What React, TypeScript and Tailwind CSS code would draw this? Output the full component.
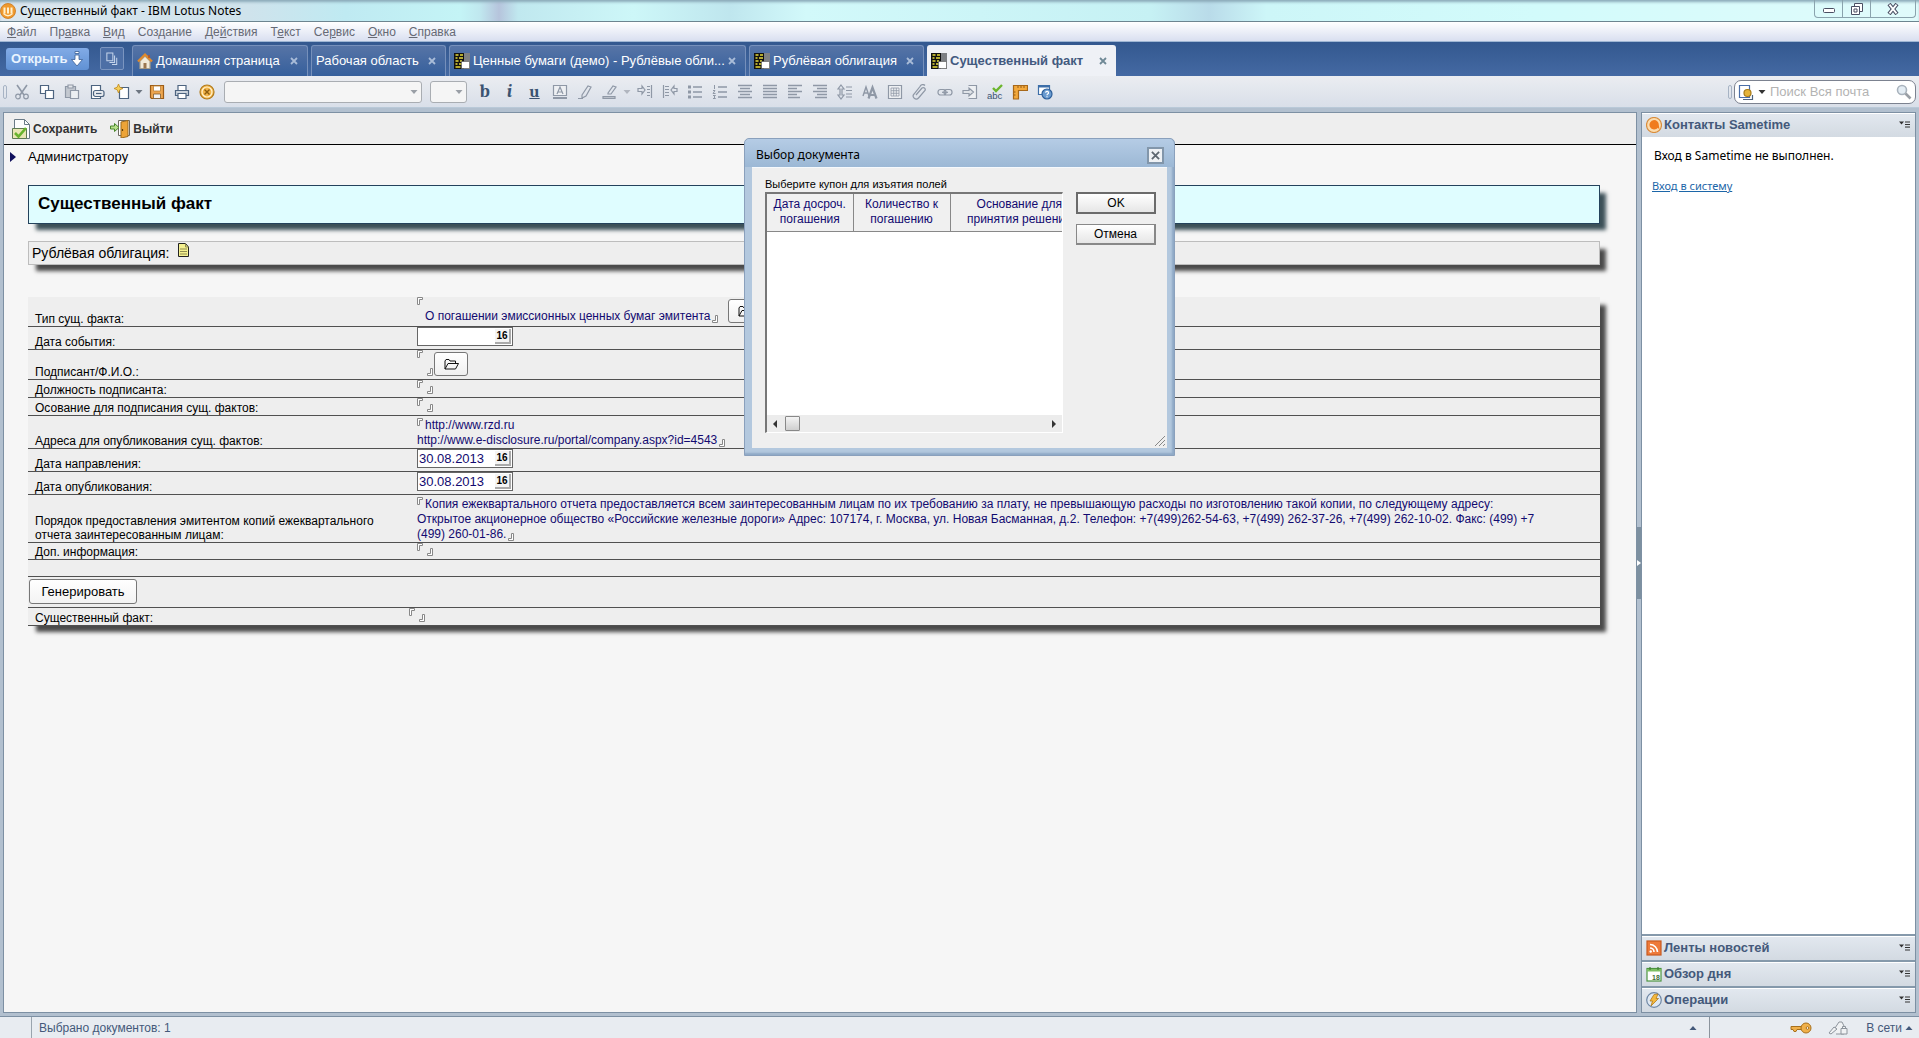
import type { ReactNode } from 'react'

const MENU = [
  ['', 'Ф', 'айл'],
  ['Пр', 'а', 'вка'],
  ['', 'В', 'ид'],
  ['Соз', 'д', 'ание'],
  ['Де', 'й', 'ствия'],
  ['Т', 'е', 'кст'],
  ['Се', 'р', 'вис'],
  ['', 'О', 'кно'],
  ['', 'С', 'правка'],
]

const G = '#8f98a6'
const D = '#4d6480'

function Svg({ children, className = 'w-4 h-4' }: { children: ReactNode; className?: string }) {
  return (
    <svg viewBox="0 0 16 16" className={`${className} shrink-0`} fill="none" stroke={G} strokeWidth="1.2" aria-hidden="true">
      {children}
    </svg>
  )
}

function Caret({ className = '' }: { className?: string }) {
  return (
    <svg viewBox="0 0 8 4" className={`w-2 h-1 shrink-0 ${className}`} fill="currentColor" aria-hidden="true">
      <path d="M0.500 0h7L4 4z" />
    </svg>
  )
}

function DbIcon() {
  return (
    <Svg>
      <path d="M0 0h16v16H0z" fill="#7d8084" stroke="none" />
      <path d="M0 0h10v16H0z" fill="#111" stroke="none" />
      <path d="M1.500 2h3M6 2h3M1.500 5h2M5 5h4M1.500 8h3M6 8h2M1.500 11h2M5 11h3M1.500 14h5" stroke="#e8dc3a" strokeWidth="1.600" />
      <path d="M7.500 8.500h8v7h-8z" fill="#fff" stroke="#555" strokeWidth="0.600" />
    </Svg>
  )
}

function HomeIcon() {
  return (
    <Svg>
      <path d="M3 8v7.500h10V8L8 3z" fill="#f2ead8" stroke="#a9a08c" />
      <path d="M1 8.500L8 1.500l7 7" stroke="#e08a2c" strokeWidth="2.200" />
      <path d="M6.500 10h3v5.500h-3z" fill="#9b7750" stroke="none" />
      <path d="M12 2v3" stroke="#b4562a" strokeWidth="1.600" />
    </Svg>
  )
}

function ListLines({ from, to }: { from: number[]; to: number[] }) {
  return (
    <Svg>
      <path d={[1, 4, 7, 10, 13].map((v, i) => `M${from[i]} ${v + 0.5}H${to[i]}`).join('')} strokeWidth="1.400" />
    </Svg>
  )
}

const FILE_TOOLS: { label: string; icon: ReactNode }[] = [
  {
    label: 'Вырезать',
    icon: (
      <Svg>
        <path d="M3 1l7 10M13 1L6 11" strokeWidth="1.600" />
        <circle cx="4" cy="12.500" r="2.300" />
        <circle cx="12" cy="12.500" r="2.300" />
      </Svg>
    ),
  },
  {
    label: 'Копировать',
    icon: (
      <Svg>
        <path d="M1.500 1.500h8v8h-8z" fill="#fff" stroke={D} />
        <path d="M6.500 6.500h8v8h-8z" fill="#fff" stroke={D} />
      </Svg>
    ),
  },
  {
    label: 'Вставить',
    icon: (
      <Svg>
        <path d="M1.500 2.500h10v11h-10z" fill="#c3c8d0" />
        <path d="M4 1h5v3H4z" fill="#e4e7eb" />
        <path d="M6.500 6.500h8v8h-8z" fill="#eceff2" />
      </Svg>
    ),
  },
  {
    label: 'Вставить ссылку',
    icon: (
      <Svg>
        <path d="M2.500 1.500h9v13h-9z" fill="#fff" stroke={D} />
        <rect x="4.500" y="6.500" width="10.500" height="6" rx="2" fill="#e9ecf0" stroke={D} />
        <path d="M7 9.500h5.500" stroke={D} />
      </Svg>
    ),
  },
  {
    label: 'Создать',
    icon: (
      <Svg>
        <path d="M5.500 3.500h9v11h-9z" fill="#fff" stroke={D} />
        <path d="M4.500 0l1.300 3.200L9 4.500 5.800 5.800 4.500 9 3.200 5.800 0 4.500l3.200-1.300z" fill="#f6cf57" stroke="#c28a20" strokeWidth="0.800" />
      </Svg>
    ),
  },
]

const SAVE_TOOLS: { label: string; icon: ReactNode }[] = [
  {
    label: 'Сохранить файл',
    icon: (
      <Svg>
        <path d="M1.500 1.500h13v13h-12l-1-1z" fill="#eda650" stroke="#9c5d18" />
        <path d="M4.500 2h7v5h-7z" fill="#fff" stroke="#b98036" strokeWidth="0.800" />
        <path d="M4.500 10h7v4.500h-7z" fill="#f4f4f4" stroke="#7c5a30" strokeWidth="0.800" />
      </Svg>
    ),
  },
  {
    label: 'Печать',
    icon: (
      <Svg>
        <path d="M4 1.500h8v5H4z" fill="#fff" stroke={D} />
        <path d="M1.500 6.500h13v5h-13z" fill="#cdd5de" stroke={D} />
        <path d="M4 9.500h8v5H4z" fill="#fff" stroke={D} />
      </Svg>
    ),
  },
  {
    label: 'Закрыть',
    icon: (
      <Svg>
        <circle cx="8" cy="8" r="7" fill="#f3b54a" stroke="#b07a1c" />
        <circle cx="8" cy="8" r="5" stroke="#fff3d0" />
        <path d="M5.500 5.500l5 5M10.500 5.500l-5 5" stroke="#8b5c10" strokeWidth="1.400" />
      </Svg>
    ),
  },
]

const COLOR_TOOLS: { label: string; icon: ReactNode }[] = [
  { label: 'Полужирный', icon: <span className="font-serif font-bold text-[18px] leading-4 text-[#3b5371]">b</span> },
  { label: 'Курсив', icon: <span className="font-serif font-bold italic text-[18px] leading-4 text-[#3b5371]">i</span> },
  { label: 'Подчёркнутый', icon: <span className="font-serif font-bold underline text-[17px] leading-4 text-[#3b5371]">u</span> },
  {
    label: 'Цвет текста',
    icon: (
      <Svg>
        <path d="M1.500 1.500h13v10h-13z" fill="#eef0f3" />
        <path d="M5 10l3-7 3 7M6 8h4" />
        <path d="M1 13h14v2H1z" fill={G} stroke="none" />
      </Svg>
    ),
  },
  {
    label: 'Маркер',
    icon: (
      <Svg>
        <path d="M5 11l6-9 3 1-5 9-4 2zM1 14.500h5" />
      </Svg>
    ),
  },
  {
    label: 'Выделение',
    icon: (
      <Svg>
        <path d="M6 9l5-7 3 1-5 7H6z" />
        <path d="M1 12.500h12v2H1z" fill="#b9bfc8" />
      </Svg>
    ),
  },
]

const PARA_TOOLS: { label: string; icon: ReactNode }[] = [
  {
    label: 'Увеличить отступ',
    icon: (
      <Svg>
        <path d="M1 4.500h4V2l3 4-3 4V7.500H1zM10 2.500h3M10 5.500h3M10 8.500h3M10 11.500h3M14.500 1v13" />
      </Svg>
    ),
  },
  {
    label: 'Уменьшить отступ',
    icon: (
      <Svg>
        <path d="M15 4.500h-3V2L9 6l3 4V7.500h3zM3 2.500h4M3 5.500h4M3 8.500h4M3 11.500h4M1.500 1v13" />
      </Svg>
    ),
  },
  {
    label: 'Маркированный список',
    icon: (
      <Svg>
        <path d="M6 3h9M6 8h9M6 13h9" strokeWidth="1.400" />
        <path d="M1 1.500h3v3H1zM1 6.500h3v3H1zM1 11.500h3v3H1z" fill={G} stroke="none" />
      </Svg>
    ),
  },
  {
    label: 'Нумерованный список',
    icon: (
      <Svg>
        <path d="M6 3h9M6 8h9M6 13h9" strokeWidth="1.400" />
        <path d="M2.500 1v4M1 6.500h2L1 9.500h2.500M1 11.500h2.500L2 13l1.500 1.500H1" strokeWidth="1" />
      </Svg>
    ),
  },
  { label: 'По центру', icon: <ListLines from={[1, 3, 1, 3, 1]} to={[15, 13, 15, 13, 15]} /> },
  { label: 'По ширине', icon: <ListLines from={[1, 1, 1, 1, 1]} to={[15, 15, 15, 15, 15]} /> },
  { label: 'По левому краю', icon: <ListLines from={[1, 1, 1, 1, 1]} to={[15, 10, 15, 10, 13]} /> },
  { label: 'По правому краю', icon: <ListLines from={[1, 5, 1, 5, 3]} to={[15, 15, 15, 15, 15]} /> },
  {
    label: 'Интервал',
    icon: (
      <Svg>
        <path d="M4 1l3 4H5v6h2l-3 4-3-4h2V5H1zM9 3h6M9 6.500h6M9 10h6M9 13h6" />
      </Svg>
    ),
  },
  {
    label: 'Шрифт',
    icon: (
      <Svg>
        <path d="M1 12l3-9 3 9M2 9h4" strokeWidth="1.400" />
        <path d="M6.500 14.500l4-11 4 11M8 11h5" strokeWidth="2.200" />
      </Svg>
    ),
  },
  {
    label: 'Таблица',
    icon: (
      <Svg>
        <path d="M1.500 1.500h13v13h-13z" fill="#eef0f3" />
        <path d="M4 4h8v8H4zM4 6.700h8M4 9.300h8M6.700 4v8M9.300 4v8" strokeWidth="0.800" />
      </Svg>
    ),
  },
  {
    label: 'Вложение',
    icon: (
      <Svg>
        <path d="M4 11l6-7a2 2 0 013 2.500L6.500 14a3 3 0 01-4.500-4l6-7.500a3 3 0 015-1" strokeWidth="1.200" />
      </Svg>
    ),
  },
  {
    label: 'Ссылка',
    icon: (
      <Svg>
        <rect x="1" y="5.500" width="8" height="5.500" rx="2.500" />
        <rect x="7" y="5.500" width="8" height="5.500" rx="2.500" />
        <path d="M5 8.300h6" />
      </Svg>
    ),
  },
  {
    label: 'Импорт',
    icon: (
      <Svg>
        <path d="M6.500 1.500h8v13h-8" fill="#eef0f3" />
        <path d="M1 6.500h6V4l4.500 4L7 12V9.500H1z" fill="#dfe3e8" />
      </Svg>
    ),
  },
  {
    label: 'Орфография',
    icon: (
      <Svg>
        <text x="0" y="15" fontSize="9.500" fontFamily="Liberation Sans, sans-serif" fill="#3b5371" stroke="none">abc</text>
        <path d="M6 4l3 3 6-6" stroke="#6cb52d" strokeWidth="2.400" />
      </Svg>
    ),
  },
  {
    label: 'Линейка',
    icon: (
      <Svg>
        <path d="M1.500 1.500h14v5h-9v8.500h-5z" fill="#f3a93c" stroke="#a7681a" />
        <path d="M6 4V2M9 4V2M12 4V2M3.500 8H2M3.500 11H2" stroke="#7b4a10" strokeWidth="0.800" />
      </Svg>
    ),
  },
  {
    label: 'Справка по окну',
    icon: (
      <Svg>
        <path d="M1.500 1.500h11v9h-11z" fill="#fff" stroke="#3d6ea8" />
        <path d="M1 1h12v2.500H1z" fill="#3d6ea8" stroke="none" />
        <circle cx="10" cy="10" r="5" fill="#6a9bd0" stroke="#2d5f9a" />
        <path d="M8.700 8.700a1.400 1.400 0 112 1.300c-.6.300-.7.600-.7 1.200M10 12.300v1" stroke="#fff" />
      </Svg>
    ),
  },
]

function Tools({ items }: { items: { label: string; icon: ReactNode }[] }) {
  return (
    <>
      {items.map((t) => (
        <button key={t.label} type="button" aria-label={t.label} className="w-[25px] h-6 flex items-center justify-center">
          {t.icon}
        </button>
      ))}
    </>
  )
}

function Tab({ title, width, icon, active = false }: { title: string; width: string; icon?: ReactNode; active?: boolean }) {
  return (
    <div
      className={`${width} h-[31px] shrink-0 flex items-center rounded-t-[3px] pl-1 pr-[9px] text-[13px] ${
        active
          ? 'bg-[#eff1f6] text-[#435a80] font-bold'
          : 'border border-b-0 border-[#7690bb] bg-gradient-to-b from-[#5674a6] to-[#355f9c] text-white'
      }`}
    >
      <button type="button" className="flex flex-1 items-center gap-[3px] whitespace-nowrap">
        {icon}
        {title}
      </button>
      <button type="button" aria-label={`Закрыть ${title}`} className={active ? 'text-[#6f8896]' : 'text-[#a9bcd8]'}>
        <svg viewBox="0 0 8 8" className="w-2 h-2" stroke="currentColor" strokeWidth="1.800" aria-hidden="true">
          <path d="M1 1l6 6M7 1L1 7" />
        </svg>
      </button>
    </div>
  )
}

function Open() {
  return (
    <svg viewBox="0 0 6 8" className="inline-block w-[6px] h-2 align-top mr-[2px] shrink-0" fill="#fff" stroke="#888" aria-hidden="true">
      <path d="M0.500 7.500v-7h5v2h-3v5z" />
    </svg>
  )
}

function Close() {
  return (
    <svg viewBox="0 0 6 8" className="inline-block w-[6px] h-2 align-text-bottom ml-[2px] shrink-0" fill="#fff" stroke="#888" aria-hidden="true">
      <path d="M5.500 0.500v7h-5v-2h3v-5z" />
    </svg>
  )
}

function Row({ height, label, htmlFor, children }: { height: string; label: string; htmlFor?: string; children?: ReactNode }) {
  return (
    <div className={`${height} flex items-stretch border-b border-[#505050]`}>
      <div className="w-[389px] shrink-0 pl-[7px] pr-4 flex items-end text-[12px] leading-[14px] text-black">
        <label htmlFor={htmlFor}>{label}</label>
      </div>
      <div className="flex-1 min-w-0 flex text-[12px] leading-[15px] text-[#120a70]">{children}</div>
    </div>
  )
}

function EmptyField() {
  return (
    <>
      <Open />
      <span className="self-end pb-[3px] leading-[0px]">
        <Close />
      </span>
    </>
  )
}

function DateField({ id, value }: { id: string; value: string }) {
  return (
    <div className="w-24 h-[19px] flex items-center bg-white border border-[#666] pr-px">
      <input id={id} defaultValue={value} className="flex-1 min-w-0 pl-[1px] text-[13px] leading-4 outline-none" />
      <button type="button" aria-label="Календарь" className="w-4 h-[15px] bg-[#f4f4f4] border-r-2 border-b-2 border-[#aaa] text-black font-bold text-[10px] leading-[13px]">
        16
      </button>
    </div>
  )
}

function FolderButton({ label }: { label: string }) {
  return (
    <button type="button" aria-label={label} className="w-[34px] h-6 shrink-0 rounded-[3px] border border-[#777] bg-gradient-to-b from-white to-[#f0f0f0] flex items-center justify-center">
      <svg viewBox="0 0 15 11" className="w-[15px] h-[11px]" fill="none" stroke="#111" aria-hidden="true">
        <path d="M1 10V2l1-1.500h3L6 2h5.500v2M1 10l3-5.500h10.500L11.500 10z" />
      </svg>
    </button>
  )
}

function PanelHeader({ title, icon }: { title: string; icon: ReactNode }) {
  return (
    <div className="h-6 shrink-0 flex items-center gap-[2px] pl-1 pr-1 pb-[2px] bg-gradient-to-b from-[#e2e8ef] to-[#d3dae2] border-t border-white">
      {icon}
      <h2 className="flex-1 text-[13px] leading-4 font-bold text-[#44597a]">{title}</h2>
      <button type="button" aria-label={`Меню: ${title}`}>
        <svg viewBox="0 0 12 8" className="w-3 h-2" aria-hidden="true">
          <path d="M0 0.500h5L2.500 3.500z" fill="#333" />
          <path d="M6 1h5M6 3.500h5M6 6h5" stroke="#333" />
        </svg>
      </button>
    </div>
  )
}

function Dialog() {
  return (
    <div
      role="dialog"
      aria-label="Выбор документа"
      className="absolute top-[138px] left-0 right-0 mx-auto w-[431px] h-[318px] flex flex-col rounded-t-[5px] border border-[#8aa0bc] bg-[#b3c8de] px-[7px] pb-[7px] shadow-[inset_-2px_-2px_2px_#8fa9c6]"
    >
      <div className="-mx-[7px] pl-[11px] pr-[10px] h-7 shrink-0 flex items-center justify-between rounded-t-[5px] bg-gradient-to-b from-[#b5cce5] to-[#9cb8d5] pt-1">
        <h2 className="font-['Noto_Sans',sans-serif] text-[12px] text-black">Выбор документа</h2>
        <button type="button" aria-label="Закрыть диалог" className="w-[17px] h-[17px] bg-[#eef1f4] border-2 border-[#8296aa] flex items-center justify-center">
          <svg viewBox="0 0 10 10" className="w-[9px] h-[9px]" stroke="#5c666f" strokeWidth="2" aria-hidden="true">
            <path d="M1 1l8 8M9 1L1 9" />
          </svg>
        </button>
      </div>

      <div className="flex-1 flex bg-[#efefef] border-t border-[#f6f9fc] pl-[13px] pr-[11px] pt-2 gap-[13px]">
        <div className="w-[298px]">
          <p className="text-[11px] leading-4 text-black">Выберите купон для изъятия полей</p>
          <div className="h-[241px] flex flex-col bg-white border-l-2 border-t-2 border-l-[#777] border-t-[#777] border-r border-b border-r-white border-b-white">
            <div className="flex-1 overflow-hidden">
              <table className="w-[321px] table-fixed border-collapse text-[12px] leading-[15px] text-[#120a70]">
                <thead>
                  <tr className="h-[37px] bg-[#f0f0f0] border-b border-[#888]">
                    <th className="w-[86px] p-0 font-normal border-r border-[#888]">
                      Дата досроч.
                      <br />
                      погашения
                    </th>
                    <th className="w-[97px] p-0 font-normal border-r border-[#888]">
                      Количество к
                      <br />
                      погашению
                    </th>
                    <th className="w-[138px] p-0 font-normal">
                      Основание для
                      <br />
                      принятия решения
                    </th>
                  </tr>
                </thead>
              </table>
            </div>
            <div className="h-[17px] shrink-0 bg-[#ececec] flex items-center px-[6px] text-[#333]">
              <svg viewBox="0 0 4 8" className="w-1 h-2" fill="currentColor" aria-hidden="true">
                <path d="M4 0v8L0 4z" />
              </svg>
              <div className="ml-2 w-[15px] h-[15px] border border-[#888] rounded-[1px] bg-gradient-to-b from-[#f4f4f4] to-[#cfcfcf]" />
              <svg viewBox="0 0 4 8" className="w-1 h-2 ml-auto" fill="currentColor" aria-hidden="true">
                <path d="M0 0v8l4-4z" />
              </svg>
            </div>
          </div>
        </div>

        <div className="flex-1 flex flex-col gap-[10px] pt-4 text-[12px] text-black">
          <button type="button" className="h-[22px] border-2 border-[#6b6b6b] bg-gradient-to-b from-white to-[#e6e6e6] leading-4">
            OK
          </button>
          <button type="button" className="h-[21px] border border-b-2 border-r-2 border-[#888] bg-gradient-to-b from-white to-[#e6e6e6] leading-4">
            Отмена
          </button>
          <svg viewBox="0 0 12 12" className="w-3 h-3 mt-auto mb-[1px] -mr-[10px] self-end" stroke="#888" aria-hidden="true">
            <path d="M1 11L11 1M5 11l6-6M9 11l2-2" />
          </svg>
        </div>
      </div>
    </div>
  )
}

export default function App() {
  return (
    <div className="relative h-screen flex flex-col overflow-hidden bg-[#b2c0cf] font-['Liberation_Sans',Arial,sans-serif]">
      {/* Window title */}
      <header className="h-[22px] shrink-0 flex items-center gap-1 border-b border-[#6d8590] bg-[linear-gradient(90deg,#dbe6ee_0%,#cfe3ec_13%,#bfeaf2_18%,#c4f4f6_24%,#c0e8ef_25%,#b6c4dc_26%,#c0e8ef_27%,#cdf7f8_33%,#bfe6ee_38%,#d2f9fa_42%,#c6f1f4_60%,#b9dbe9_63%,#cdf6f8_66%,#d2fbfb_80%,#e0fbfb_100%)] shadow-[inset_0_3px_3px_-1px_#8aa9b8]">
        <Svg>
          <circle cx="8" cy="8" r="7.500" fill="#f09a2e" stroke="#c9761a" strokeWidth="0.800" />
          <path d="M3.500 4.500h2v6h-2zM7 4.500h2v6H7zM10.500 4.500h2v6h-2z" fill="#fff1cf" stroke="none" />
          <path d="M3.500 10.500Q8 15 12.500 10.500" stroke="#fff1cf" />
        </Svg>
        <h1 className="flex-1 font-['Noto_Sans',sans-serif] text-[12px] text-black">Существенный факт - IBM Lotus Notes</h1>
        <div className="self-start h-[18px] w-[102px] mr-[3px] flex border border-t-0 border-[#8aa3ad] rounded-b-[4px] text-[#4a4f63]">
          <button type="button" aria-label="Свернуть" className="w-7 flex items-center justify-center border-r border-[#8aa3ad]">
            <svg viewBox="0 0 12 6" className="w-3 h-[6px] mt-1" fill="#fff" stroke="currentColor" aria-hidden="true">
              <rect x="0.500" y="0.500" width="11" height="4" rx="1" />
            </svg>
          </button>
          <button type="button" aria-label="Восстановить" className="w-7 flex items-center justify-center border-r border-[#8aa3ad]">
            <svg viewBox="0 0 12 12" className="w-3 h-3" fill="#fff" stroke="currentColor" aria-hidden="true">
              <path d="M3.500 0.500h8v8h-8z" />
              <path d="M0.500 3.500h8v8h-8z" />
              <path d="M3 6h3v3H3z" />
            </svg>
          </button>
          <button type="button" aria-label="Закрыть окно" className="flex-1 flex items-center justify-center">
            <svg viewBox="0 0 12 12" className="w-3 h-3" aria-hidden="true">
              <path d="M2 1l8 10M10 1L2 11" stroke="#4a4f63" strokeWidth="4" />
              <path d="M2.500 1.600l7 8.800M9.500 1.600l-7 8.800" stroke="#fff" strokeWidth="1.800" />
            </svg>
          </button>
        </div>
      </header>

      <nav className="h-5 shrink-0 flex items-center gap-[13px] pl-[7px] border-b border-[#9fb6d3] bg-gradient-to-b from-white to-[#d9dff0] text-[12px] leading-4 text-[#666a75]">
        {MENU.map(([before, key, after]) => (
          <button key={before + key + after} type="button">
            {before}
            <span className="underline">{key}</span>
            {after}
          </button>
        ))}
      </nav>

      {/* Open windows */}
      <div className="h-[34px] shrink-0 flex items-end bg-gradient-to-b from-[#33588f] to-[#4469a3] pl-[6px]">
        <button type="button" className="mb-[6px] w-[83px] h-[22px] pl-[5px] flex items-center gap-1 rounded-[3px] bg-gradient-to-b from-[#82abe6] to-[#6091d4] text-[13px] font-bold text-[#eaf4ff]">
          Открыть
          <svg viewBox="0 0 12 16" className="w-3 h-4" fill="#fff" stroke="#3a6096" strokeWidth="0.800" aria-hidden="true">
            <path d="M4 0.500h4v2H4zM4 4h4v4.500h3.500L6 15 .5 8.500H4z" />
          </svg>
        </button>
        <button type="button" aria-label="Окна" className="mb-[6px] ml-[11px] mr-2 w-6 h-[23px] rounded-[2px] border border-[#7b95c0] bg-[#4d6fa6] flex items-center justify-center">
          <svg viewBox="0 0 14 16" className="w-3 h-[14px]" fill="none" stroke="#c5d4ea" strokeWidth="1.200" aria-hidden="true">
            <path d="M1 1h7v9H1zM10 4v8H4M12.500 6.500v8H7" />
          </svg>
        </button>
        <div className="flex gap-[3px]">
          <Tab width="w-[176px]" title="Домашняя страница" icon={<HomeIcon />} />
          <Tab width="w-[135px]" title="Рабочая область" />
          <Tab width="w-[297px]" title="Ценные бумаги (демо) - Рублёвые обли..." icon={<DbIcon />} />
          <Tab width="w-[175px]" title="Рублёвая облигация" icon={<DbIcon />} />
          <Tab width="w-[189px]" title="Существенный факт" icon={<DbIcon />} active />
        </div>
      </div>

      {/* Toolbar */}
      <div className="h-8 shrink-0 flex items-center pl-[3px] pr-[3px] bg-gradient-to-b from-[#ebedf1] to-[#d9dfe9] border-b border-[#b9c9d8] text-[#6d7682]">
        <div className="w-1 h-[14px] mr-[2px] rounded-full border border-[#a7b3c4]" />
        <Tools items={FILE_TOOLS} />
        <Caret className="mx-px" />
        <Tools items={SAVE_TOOLS} />
        <div className="relative ml-[5px] text-[#9a9fa6]">
          <select aria-label="Шрифт текста" className="block appearance-none w-[198px] h-[22px] rounded-[3px] border border-[#a9adb2] bg-[#f5f5f5]" />
          <Caret className="absolute right-1 top-[9px]" />
        </div>
        <div className="relative ml-2 mr-[5px] text-[#9a9fa6]">
          <select aria-label="Размер шрифта" className="block appearance-none w-[37px] h-[22px] rounded-[3px] border border-[#a9adb2] bg-[#f5f5f5]" />
          <Caret className="absolute right-1 top-[9px]" />
        </div>
        <Tools items={COLOR_TOOLS} />
        <Caret className="mx-px text-[#b1b6bf]" />
        <Tools items={PARA_TOOLS} />

        <div className="ml-auto w-1 h-[14px] mr-[2px] rounded-full border border-[#a7b3c4]" />
        <div className="w-[182px] h-6 flex items-center rounded-[7px] border border-[#7c8290] bg-white pl-[3px] pr-[3px] gap-1">
          <Svg>
            <path d="M1.500 1.500h10v12h-10z" fill="#fff" stroke="#4a6ea8" />
            <circle cx="9.500" cy="9" r="3.500" fill="#e5b43a" stroke="#a87b18" />
            <path d="M5 15.500h9.500V11" stroke="#4d6480" />
          </Svg>
          <Caret className="text-[#333]" />
          <input aria-label="Поиск" placeholder="Поиск Вся почта" className="flex-1 min-w-0 bg-transparent text-[13px] leading-4 outline-none placeholder:text-[#b3b3b3]" />
          <button type="button" aria-label="Найти">
            <Svg>
              <circle cx="6" cy="6" r="4.500" fill="#e4edf4" stroke="#a9b3bd" strokeWidth="1.600" />
              <path d="M9.500 9.500l5 5" stroke="#9a9fa5" strokeWidth="2.600" />
            </Svg>
          </button>
        </div>
      </div>

      <div className="flex-1 min-h-0 flex pt-1 pb-[3px] pl-[3px] pr-[3px]">
        <main className="flex-1 min-w-0 bg-[#f6f6f6] border border-[#7d90a3]">
          <div className="h-8 flex items-center gap-[13px] pl-2 bg-[#eeeeee] border-b border-black text-[12px] font-bold text-[#333]">
            <button type="button" className="flex items-center gap-[3px]">
              <svg viewBox="0 0 18 20" className="w-[18px] h-5" fill="none" aria-hidden="true">
                <path d="M2.500 0.500h10l5 5v14h-15z" fill="#fdfdfd" stroke="#6a7a86" />
                <path d="M12.500 0.500v5h5" stroke="#6a7a86" />
                <path d="M0.500 9.500h14v10H0.500z" fill="#e9e6b4" stroke="#5f7a52" />
                <path d="M3 14l3.500 3.500L14 9" stroke="#69b42e" strokeWidth="2.600" />
              </svg>
              Сохранить
            </button>
            <button type="button" className="flex items-center gap-[3px]">
              <svg viewBox="0 0 20 18" className="w-5 h-[18px]" aria-hidden="true">
                <path d="M8.500 0.500h11v15h-11z" fill="#fff" stroke="#6f6a60" />
                <path d="M11 2l7-1.500v16L11 18z" fill="#eda437" stroke="#9d6a1c" />
                <path d="M0.500 6h4V3.500L9 7.500l-4.500 4V9h-4z" fill="#b8e08c" stroke="#48862a" />
                <path d="M12.500 9v2" stroke="#5a3c0c" strokeWidth="1.200" />
              </svg>
              Выйти
            </button>
          </div>

          <div className="pl-6 pr-9">
            <button type="button" className="-ml-[18px] mt-1 flex items-center gap-3 h-4 text-[13px] text-black">
              <svg viewBox="0 0 6 10" className="w-[6px] h-[10px]" fill="#10105c" aria-hidden="true">
                <path d="M0 0l6 5-6 5z" />
              </svg>
              Администратору
            </button>

            <h2 className="mt-5 h-[39px] flex items-center pl-[9px] pb-[2px] bg-[#dffdff] border border-[#24425c] text-[17px] font-bold text-black shadow-[7px_7px_4px_-1px_#3c5058]">
              Существенный факт
            </h2>

            <div className="mt-[17px] h-6 flex gap-[9px] pl-[3px] bg-[#eeeeee] border border-[#bdbdbd] text-[14px] leading-[22px] text-black shadow-[7px_7px_4px_-1px_#4a4a4a]">
              Рублёвая облигация:
              <svg viewBox="0 0 11 14" className="w-[11px] h-[14px] mt-[1px]" aria-hidden="true">
                <path d="M0.500 0.500h7l3 3.500v9.500h-10z" fill="#f4f08f" stroke="#222" />
                <path d="M7.500 0.500v3.500h3M2 6h7M2 8.500h7M2 11h7" fill="none" stroke="#8f8c50" />
              </svg>
            </div>

            <form className="mt-8 bg-[#eeeeee] shadow-[7px_7px_4px_-1px_#4a4a4a]">
              <Row height="min-h-[30px]" label="Тип сущ. факта:">
                <Open />
                <span className="self-end pb-[2px]">
                  О погашении эмиссионных ценных бумаг эмитента
                  <Close />
                </span>
                <div className="mt-[2px] ml-[10px]">
                  <FolderButton label="Выбрать тип" />
                </div>
              </Row>
              <Row height="min-h-[23px]" label="Дата события:" htmlFor="event-date">
                <DateField id="event-date" value="" />
              </Row>
              <Row height="min-h-[30px]" label="Подписант/Ф.И.О.:">
                <EmptyField />
                <div className="mt-[2px] ml-px">
                  <FolderButton label="Выбрать подписанта" />
                </div>
              </Row>
              <Row height="min-h-[18px]" label="Должность подписанта:">
                <EmptyField />
              </Row>
              <Row height="min-h-[18px]" label="Осование для подписания сущ. фактов:">
                <EmptyField />
              </Row>
              <Row height="min-h-[33px]" label="Адреса для опубликования сущ. фактов:">
                <p className="self-end">
                  <Open />
                  http://www.rzd.ru
                  <br />
                  http://www.e-disclosure.ru/portal/company.aspx?id=4543
                  <Close />
                </p>
              </Row>
              <Row height="min-h-[23px]" label="Дата направления:" htmlFor="send-date">
                <DateField id="send-date" value="30.08.2013" />
              </Row>
              <Row height="min-h-[23px]" label="Дата опубликования:" htmlFor="publish-date">
                <DateField id="publish-date" value="30.08.2013" />
              </Row>
              <Row height="min-h-[48px]" label="Порядок предоставления эмитентом копий ежеквартального отчета заинтересованным лицам:">
                <p className="self-end">
                  <Open />
                  Копия ежеквартального отчета предоставляется всем заинтересованным лицам по их требованию за плату, не превышающую расходы по изготовлению такой копии, по следующему адресу:
                  <br />
                  Открытое акционерное общество «Российские железные дороги» Адрес: 107174, г. Москва, ул. Новая Басманная, д.2. Телефон: +7(499)262-54-63, +7(499) 262-37-26, +7(499) 262-10-02. Факс: (499) +7
                  <br />
                  (499) 260-01-86.
                  <Close />
                </p>
              </Row>
              <Row height="min-h-[17px]" label="Доп. информация:">
                <EmptyField />
              </Row>
              <div className="h-[17px] border-b border-[#505050]" />
              <div className="h-[31px] border-b border-[#505050] pt-[2px] pl-px">
                <button type="button" className="w-[108px] h-[25px] rounded-[3px] border border-[#777] bg-gradient-to-b from-white to-[#f3f3f3] text-[13px] text-black">
                  Генерировать
                </button>
              </div>
              <Row height="min-h-[18px]" label="Существенный факт:">
                <div className="flex -ml-2">
                  <EmptyField />
                </div>
              </Row>
            </form>
          </div>
        </main>

        {/* Splitter */}
        <div className="w-1 shrink-0 flex items-center">
          <div className="w-full h-[72px] bg-[#7d90a0] flex items-center">
            <svg viewBox="0 0 4 6" className="w-1 h-[6px]" fill="#fff" aria-hidden="true">
              <path d="M0 0l4 3-4 3z" />
            </svg>
          </div>
        </div>

        <aside className="w-[275px] shrink-0 flex flex-col gap-[2px] border border-[#7d90a3] bg-[#8599ab]">
          <section className="flex-1 flex flex-col bg-white">
            <PanelHeader
              title="Контакты Sametime"
              icon={
                <Svg>
                  <circle cx="8" cy="8" r="7.500" fill="#fbdcae" stroke="#d98d3c" />
                  <path d="M8 3a4.800 4.800 0 104 7.800l1.500 2L12.800 8A4.800 4.800 0 008 3z" fill="#f07c1e" stroke="none" />
                </Svg>
              }
            />
            <p className="pl-3 pt-[11px] text-[12px] leading-4 text-black font-['Noto_Sans',sans-serif]">Вход в Sametime не выполнен.</p>
            <a href="#login" className="pl-[10px] mt-[14px] text-[11px] leading-4 text-[#1c66a8] underline font-['Noto_Sans',sans-serif]">
              Вход в систему
            </a>
          </section>
          <PanelHeader
            title="Ленты новостей"
            icon={
              <Svg>
                <rect x="1" y="1" width="14" height="14" fill="#ee7a3a" stroke="#c85a20" />
                <path d="M4 8a4 4 0 014 4M4 4.500a7.500 7.500 0 017.500 7.500" stroke="#fff" strokeWidth="1.600" />
                <circle cx="4.700" cy="11.500" r="1.200" fill="#fff" stroke="none" />
              </Svg>
            }
          />
          <PanelHeader
            title="Обзор дня"
            icon={
              <Svg>
                <rect x="1" y="2.500" width="14" height="12.500" fill="#fff" stroke="#4c9440" />
                <path d="M1 3h14v2.500H1z" fill="#7cbf63" stroke="none" />
                <path d="M4 1v3M12 1v3" stroke="#3f7e34" />
                <text x="6" y="13.500" fontSize="7" fontWeight="bold" fontFamily="Liberation Sans, sans-serif" fill="#3f6e3a" stroke="none">18</text>
              </Svg>
            }
          />
          <PanelHeader
            title="Операции"
            icon={
              <Svg>
                <circle cx="8" cy="8" r="7.300" fill="#dfe8f2" stroke="#6e87a5" />
                <path d="M8 2.500l4-.5-2 4.500h2.500L5 14l1.500-5H4z" fill="#f5b93e" stroke="#b07a1c" strokeWidth="0.800" />
              </Svg>
            }
          />
        </aside>
      </div>

      <footer className="h-[22px] shrink-0 flex items-center border-t border-[#7d90a3] bg-[#e8ecf1] text-[12px] text-[#44597a]">
        <div className="w-8 h-full border-r border-[#9aa4ae]" />
        <p className="pl-[7px] flex-1">Выбрано документов: 1</p>
        <Caret className="rotate-180 mr-3" />
        <div className="w-[210px] h-full pr-[6px] flex items-center justify-end border-l border-[#8b949d]">
          <svg viewBox="0 0 22 12" className="w-[22px] h-3 mr-4" fill="#f0b04a" stroke="#a8701c" aria-hidden="true">
            <path d="M1 4.500h11v3H7l-1 2H4l-1-2H1z" />
            <circle cx="16" cy="6" r="5" />
            <circle cx="17.500" cy="6" r="1.300" fill="#fff" />
          </svg>
          <svg viewBox="0 0 20 14" className="w-5 h-[14px] mr-[18px]" fill="#f0f2f4" stroke="#8d949c" aria-hidden="true">
            <path d="M1 12l5-6 3 2-6 5zM7 7l4-6h3l2 4v8H8" />
            <path d="M13 7.500h6v5.500h-6zM14.500 7.500V5.500h3v2" />
          </svg>
          <button type="button" className="flex items-center gap-[3px]">
            В сети
            <Caret className="rotate-180" />
          </button>
        </div>
      </footer>

      <Dialog />
    </div>
  )
}
